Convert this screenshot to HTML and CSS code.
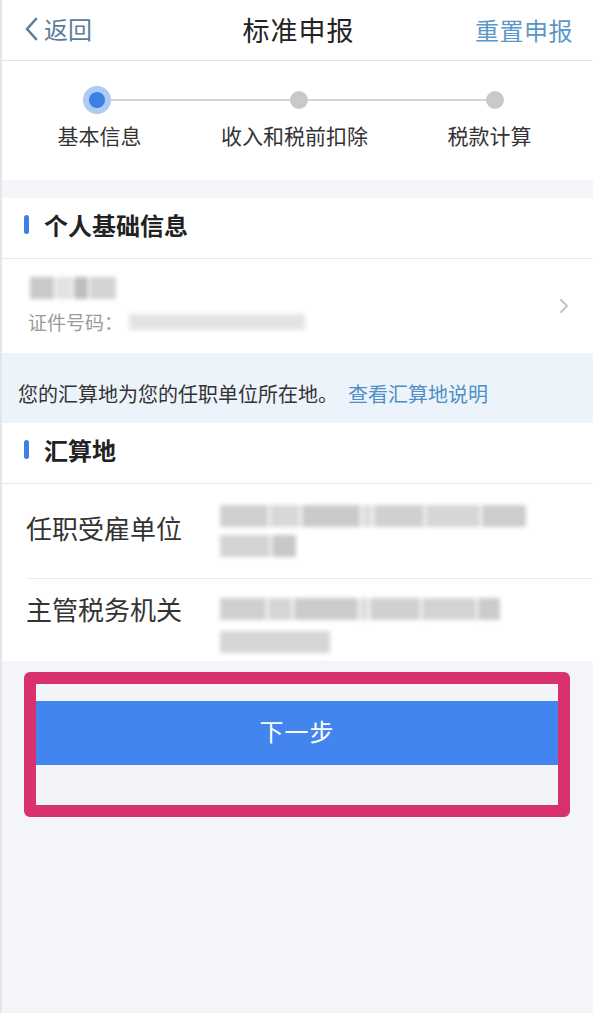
FILE: index.html
```html
<!DOCTYPE html>
<html lang="zh-CN">
<head>
<meta charset="utf-8">
<title>标准申报</title>
<link rel="stylesheet" href="styles.css">
</head>
<body>
<div class="page">
  <header class="topbar">
    <div class="back">
      <svg class="back-icon" width="14" height="24" viewBox="0 0 14 24"><path d="M12 2 L3 12 L12 22" fill="none" stroke="#5a7d9c" stroke-width="2.6" stroke-linecap="round" stroke-linejoin="round"/></svg>
      <span>返回</span>
    </div>
    <div class="title">标准申报</div>
    <div class="reset">重置申报</div>
  </header>

  <section class="stepper">
    <div class="track">
      <span class="dot dot-active"></span>
      <span class="line"></span>
      <span class="dot"></span>
      <span class="line"></span>
      <span class="dot"></span>
    </div>
    <div class="step-labels">
      <span>基本信息</span>
      <span>收入和税前扣除</span>
      <span>税款计算</span>
    </div>
  </section>

  <section class="card card-first">
    <h2 class="sec-title"><span class="bar"></span>个人基础信息</h2>
    <div class="person">
      <div class="person-info">
        <div class="blur-row name-row">
          <span class="blk" style="width:24px;background:#c9c9c9"></span>
          <span class="blk" style="width:16px;background:#e2e2e2"></span>
          <span class="blk" style="width:14px;background:#bdbdbd"></span>
          <span class="blk" style="width:26px;background:#d4d4d4"></span>
        </div>
        <div class="id-row">
          <span class="id-label">证件号码：</span>
          <span class="id-blur"></span>
        </div>
      </div>
      <svg class="chev" width="10" height="16" viewBox="0 0 10 16"><path d="M2 2 L8 8 L2 14" fill="none" stroke="#c4c4c4" stroke-width="2" stroke-linecap="round" stroke-linejoin="round"/></svg>
    </div>
  </section>

  <div class="notice">您的汇算地为您的任职单位所在地。<a class="notice-link">查看汇算地说明</a></div>

  <section class="card">
    <h2 class="sec-title"><span class="bar"></span>汇算地</h2>
    <div class="kv kv-first">
      <div class="kv-label">任职受雇单位</div>
      <div class="kv-value">
        <div class="blur-row">
          <span class="blk" style="width:48px;background:#cfcfcf"></span>
          <span class="blk" style="width:30px;background:#d8d8d8"></span>
          <span class="blk" style="width:58px;background:#cacaca"></span>
          <span class="blk" style="width:10px;background:#dedede"></span>
          <span class="blk" style="width:50px;background:#d0d0d0"></span>
          <span class="blk" style="width:54px;background:#d6d6d6"></span>
          <span class="blk" style="width:44px;background:#cdcdcd"></span>
        </div>
        <div class="blur-row">
          <span class="blk" style="width:50px;background:#d4d4d4"></span>
          <span class="blk" style="width:24px;background:#c8c8c8"></span>
        </div>
      </div>
    </div>
    <div class="kv kv-divided">
      <div class="kv-label">主管税务机关</div>
      <div class="kv-value">
        <div class="blur-row">
          <span class="blk" style="width:46px;background:#cfcfcf"></span>
          <span class="blk" style="width:24px;background:#d6d6d6"></span>
          <span class="blk" style="width:64px;background:#cbcbcb"></span>
          <span class="blk" style="width:8px;background:#dcdcdc"></span>
          <span class="blk" style="width:50px;background:#d0d0d0"></span>
          <span class="blk" style="width:54px;background:#d3d3d3"></span>
          <span class="blk" style="width:22px;background:#cbcbcb"></span>
        </div>
        <div class="blur-row">
          <span class="blk" style="width:110px;background:#d6d6d6"></span>
        </div>
      </div>
    </div>
  </section>

  <div class="highlight">
    <button class="next-btn">下一步</button>
  </div>
</div>
</body>
</html>
```

FILE: styles.css
```css
* { box-sizing: border-box; }
html, body { margin: 0; padding: 0; }
body {
  background: #f4f5f8;
  font-family: "Noto Sans CJK SC", "Noto Sans", sans-serif;
  color: #333;
}
.page {
  min-height: 1013px;
  border-left: 2px solid #e6e6e6;
  background: #f4f5f8;
}
.topbar {
  height: 61px;
  background: #fff;
  border-bottom: 1px solid #e4e4e4;
  display: grid;
  grid-template-columns: 1fr auto 1fr;
  align-items: center;
  padding: 0 20px 2px 22px;
}
.back {
  display: flex;
  align-items: center;
  gap: 6px;
  color: #5a7d9c;
  font-size: 24px;
  line-height: 1;
}
.title {
  font-size: 27px;
  color: #222;
  letter-spacing: 1px;
}
.reset {
  justify-self: end;
  font-size: 24px;
  color: #5c97c9;
  letter-spacing: 0.5px;
}
.stepper {
  background: #fff;
  height: 119px;
  padding-top: 25px;
}
.track {
  display: flex;
  align-items: center;
  padding: 0 89px 0 81px;
  height: 28px;
}
.dot {
  width: 18px;
  height: 18px;
  border-radius: 50%;
  background: #c9c9c9;
  flex: none;
}
.dot-active {
  width: 28px;
  height: 28px;
  background: #3e7fe6;
  border: 6px solid #aecbf3;
}
.line {
  flex: 1;
  height: 2px;
  background: #d6d6d6;
}
.step-labels {
  display: grid;
  grid-template-columns: repeat(3, 1fr);
  text-align: center;
  font-size: 21px;
  margin-top: 6px;
  padding-right: 6px;
}
.card {
  background: #fff;
}
.card-first {
  margin-top: 18px;
}
.sec-title {
  margin: 0;
  height: 61px;
  display: flex;
  align-items: center;
  padding: 0 0 8px 22px;
  font-size: 24px;
  font-weight: 700;
  color: #222;
  border-bottom: 1px solid #e8e8e8;
}
.bar {
  width: 5px;
  height: 19px;
  border-radius: 3px;
  background: #3e7fe6;
  margin-right: 15px;
}
.person {
  height: 94px;
  display: flex;
  align-items: center;
  justify-content: space-between;
  padding: 0 24px 0 26px;
}
.person-info {
  display: flex;
  flex-direction: column;
  gap: 9px;
}
.blur-row {
  display: flex;
  gap: 2px;
  height: 22px;
  filter: blur(2px);
}
.blk {
  display: block;
  height: 100%;
}
.name-row { height: 22px; padding-left: 2px; }
.id-row {
  display: flex;
  align-items: center;
  font-size: 19px;
  color: #9a9a9a;
}
.id-blur {
  display: block;
  width: 176px;
  height: 16px;
  background: #e3e3e3;
  filter: blur(2.5px);
  margin-left: 6px;
}
.notice {
  height: 70px;
  background: #edf3fb;
  display: flex;
  align-items: center;
  padding-left: 16px;
  padding-top: 10px;
  font-size: 20px;
  color: #333;
}
.notice-link {
  color: #4e8fc7;
  margin-left: 10px;
}
.kv {
  display: flex;
  margin-left: 24px;
  padding-right: 20px;
}
.kv-first {
  height: 94px;
  padding-top: 18px;
}
.kv-divided {
  border-top: 1px solid #ececec;
  padding-top: 4px;
  padding-bottom: 8px;
}
.kv-label {
  width: 194px;
  flex: none;
  font-size: 26px;
  color: #333;
  line-height: 36px;
}
.kv-first .kv-label { padding-top: 8px; }
.kv-divided .kv-label { padding-top: 8px; }
.kv-value {
  display: flex;
  flex-direction: column;
}
.kv-first .kv-value { padding-top: 3px; gap: 8px; }
.kv-divided .kv-value { padding-top: 15px; gap: 11px; }
.highlight {
  margin: 11px 23px 0 22px;
  border: 12px solid #d9306f;
  border-radius: 6px;
  background: #f3f4f8;
  padding: 17px 0 40px;
}
.next-btn {
  display: block;
  width: 100%;
  height: 64px;
  border: none;
  background: #4285ee;
  color: #fff;
  font-family: "Noto Sans CJK SC", "Noto Sans", sans-serif;
  font-size: 24px;
  letter-spacing: 1px;
  padding: 0 0 6px;
}
```
